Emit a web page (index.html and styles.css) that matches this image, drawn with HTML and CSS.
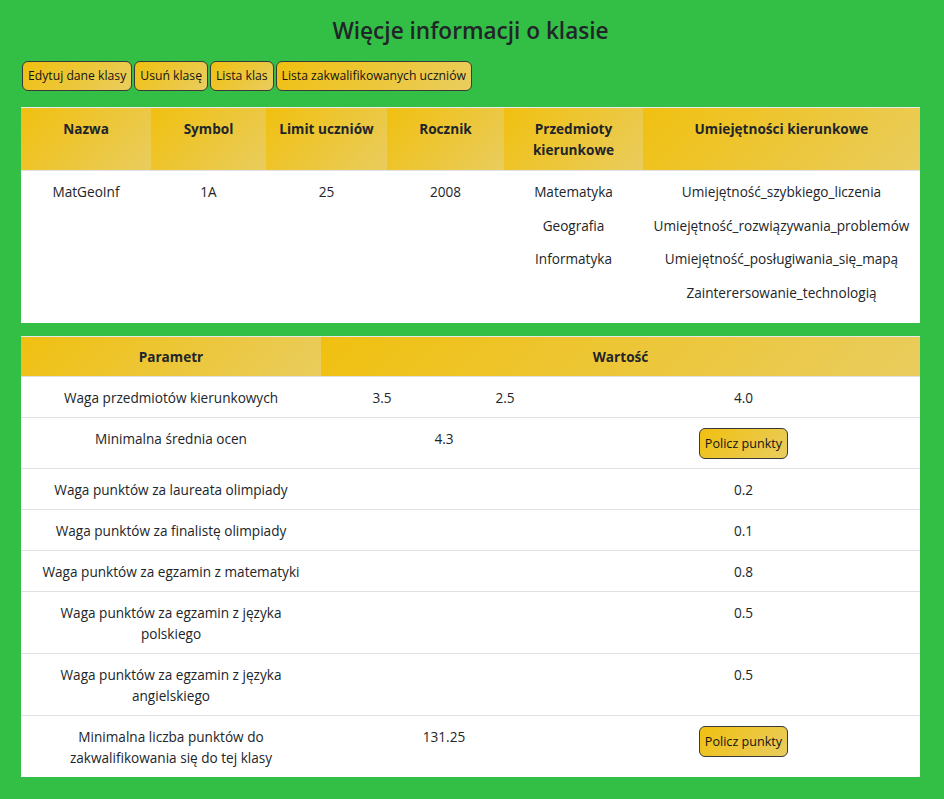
FILE: index.html
```html
<!DOCTYPE html>
<html lang="pl">
<head>
<meta charset="utf-8">
<title>Więcje informacji o klasie</title>
<link rel="stylesheet" href="styles.css">
</head>
<body>
<main class="page">
  <h1 class="title">Więcje informacji o klasie</h1>
  <div class="actions">
    <button class="btn">Edytuj dane klasy</button>
    <button class="btn">Usuń klasę</button>
    <button class="btn">Lista klas</button>
    <button class="btn">Lista zakwalifikowanych uczniów</button>
  </div>

  <table class="tbl tbl-info">
    <colgroup>
      <col class="c-nazwa"><col class="c-symbol"><col class="c-limit"><col class="c-rocznik"><col class="c-przedm"><col>
    </colgroup>
    <thead>
      <tr>
        <th>Nazwa</th>
        <th>Symbol</th>
        <th>Limit uczniów</th>
        <th>Rocznik</th>
        <th>Przedmioty kierunkowe</th>
        <th>Umiejętności kierunkowe</th>
      </tr>
    </thead>
    <tbody>
      <tr>
        <td>MatGeoInf</td>
        <td>1A</td>
        <td>25</td>
        <td>2008</td>
        <td>
          <div class="list">
            <div>Matematyka</div>
            <div>Geografia</div>
            <div>Informatyka</div>
          </div>
        </td>
        <td>
          <div class="list">
            <div>Umiejętność_szybkiego_liczenia</div>
            <div>Umiejętność_rozwiązywania_problemów</div>
            <div>Umiejętność_posługiwania_się_mapą</div>
            <div>Zainterersowanie_technologią</div>
          </div>
        </td>
      </tr>
    </tbody>
  </table>

  <table class="tbl tbl-params">
    <colgroup>
      <col class="c-param"><col class="c-v1"><col class="c-v2"><col>
    </colgroup>
    <thead>
      <tr>
        <th>Parametr</th>
        <th colspan="3">Wartość</th>
      </tr>
    </thead>
    <tbody>
      <tr>
        <td>Waga przedmiotów kierunkowych</td>
        <td>3.5</td>
        <td>2.5</td>
        <td>4.0</td>
      </tr>
      <tr>
        <td>Minimalna średnia ocen</td>
        <td colspan="2">4.3</td>
        <td><button class="btn btn-sm">Policz punkty</button></td>
      </tr>
      <tr>
        <td>Waga punktów za laureata olimpiady</td>
        <td colspan="2"></td>
        <td>0.2</td>
      </tr>
      <tr>
        <td>Waga punktów za finalistę olimpiady</td>
        <td colspan="2"></td>
        <td>0.1</td>
      </tr>
      <tr>
        <td>Waga punktów za egzamin z matematyki</td>
        <td colspan="2"></td>
        <td>0.8</td>
      </tr>
      <tr>
        <td>Waga punktów za egzamin z języka polskiego</td>
        <td colspan="2"></td>
        <td>0.5</td>
      </tr>
      <tr>
        <td>Waga punktów za egzamin z języka angielskiego</td>
        <td colspan="2"></td>
        <td>0.5</td>
      </tr>
      <tr>
        <td>Minimalna liczba punktów do zakwalifikowania się do tej klasy</td>
        <td colspan="2">131.25</td>
        <td><button class="btn btn-sm">Policz punkty</button></td>
      </tr>
    </tbody>
  </table>
</main>
</body>
</html>
```
FILE: styles.css
```css
html, body {
  margin: 0;
  padding: 0;
}

body {
  background: #33bf45;
  color: #212529;
  font-family: "Open Sans", "Noto Sans", sans-serif;
  font-size: 13.6px;
  line-height: 21px;
}

.page {
  width: 899px;
  margin-left: 21px;
  padding-top: 17px;
}

.title {
  margin: 0;
  text-align: center;
  font-size: 22.6px;
  line-height: 27px;
  font-weight: 600;
  color: #212529;
}

.actions {
  display: flex;
  gap: 2px;
  margin: 17px 0 16px 1px;
}

.btn {
  margin: 0;
  font-family: "Open Sans", "Noto Sans", sans-serif;
  font-size: 12.2px;
  line-height: 18px;
  color: #141414;
  padding: 5px 5px;
  border: 1px solid #3a3a3a;
  border-radius: 6px;
  background: linear-gradient(135deg, #f0c010 0%, #e9cd5f 100%);
  cursor: pointer;
}

.btn-sm {
  font-size: 12.6px;
  line-height: 21px;
  padding: 4px 5px;
  vertical-align: top;
}

.tbl {
  width: 899px;
  table-layout: fixed;
  border-collapse: collapse;
  background: #fff;
  text-align: center;
  border-top: 1px solid #e6e8ea;
}

.tbl th {
  font-weight: 700;
  padding: 10px;
  vertical-align: top;
  background: linear-gradient(135deg, #f0c010 0%, #e9cc5e 100%);
  border-bottom: 1px solid #dee2e6;
}

.tbl td {
  padding: 9.5px 10px;
  vertical-align: top;
  border-top: 1px solid #dee2e6;
}

.tbl-info td {
  padding: 10px 10px 20px;
  white-space: nowrap;
}

.tbl-info {
  margin-bottom: 13px;
}

.tbl-params th {
  padding: 9px 10px;
}

.list {
  display: flex;
  flex-direction: column;
  gap: 12.7px;
}

.c-nazwa { width: 130px; }
.c-symbol { width: 115px; }
.c-limit { width: 121px; }
.c-rocznik { width: 117px; }
.c-przedm { width: 139px; }

.c-param { width: 300px; }
.c-v1 { width: 122px; }
.c-v2 { width: 124px; }
```
